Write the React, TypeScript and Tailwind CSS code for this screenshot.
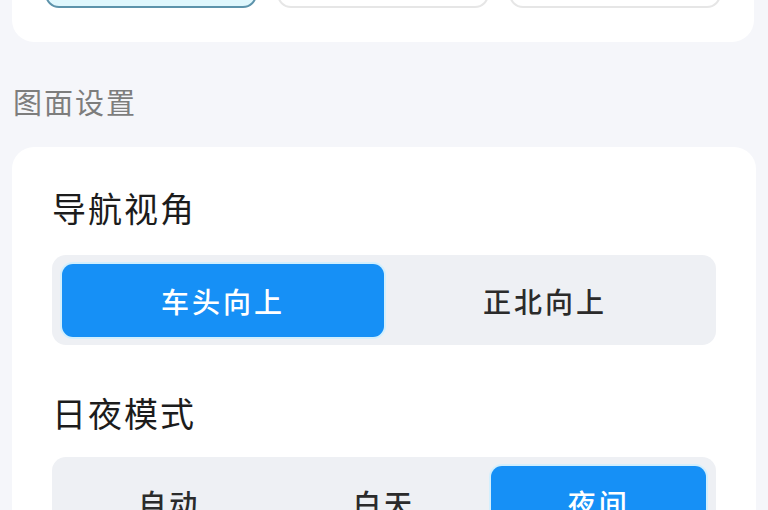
import React from "react";

const font = { fontFamily: '"Noto Sans CJK SC", "Noto Sans", sans-serif' };

function Segmented({ options, active }: { options: string[]; active: number }) {
    return (
        <div
            className="grid rounded-[14px] bg-[#eef0f4] px-[10px] pt-[9px] pb-[8px]"
            style={{ gridTemplateColumns: `repeat(${options.length}, minmax(0, 1fr))` }}
        >
            {options.map((label, i) => (
                <div
                    key={label}
                    className={
                        i === active
                            ? "flex h-[73px] items-center justify-center rounded-[11px] bg-[#1690f6] text-[28px] font-medium tracking-[3px] text-white shadow-[0_0_0_2px_#d3effd]"
                            : "flex h-[73px] items-center justify-center text-[28px] font-medium tracking-[3px] text-[#2b2b2b]"
                    }
                >
                    {label}
                </div>
            ))}
        </div>
    );
}

export default function App() {
    return (
        <div className="h-[510px] w-[768px] overflow-hidden bg-[#f5f6fa]" style={font}>
            {/* Previous card, cut off at the top */}
            <div className="-mt-[72px] ml-[12px] mr-[14px] rounded-[22px] bg-white px-[33px] pt-[20px] pb-[34px]">
                <div className="grid grid-cols-3 gap-[20px]">
                    <div className="h-[60px] rounded-[14px] border-2 border-[#5d93ab] bg-[#dff7fd]" />
                    <div className="h-[60px] rounded-[14px] border-2 border-[#e6e6e6] bg-white" />
                    <div className="h-[60px] rounded-[14px] border-2 border-[#e6e6e6] bg-white" />
                </div>
            </div>

            <div className="ml-[13px] mt-[42px] text-[29px] leading-[34px] tracking-[2px] text-[#7d7d7d]">图面设置</div>

            <div className="mx-[12px] mt-[29px] rounded-[22px] bg-white px-[40px] pt-[43px] pb-[40px]">
                <div className="text-[34px] leading-[36px] tracking-[2px] text-[#1c1c1c]">导航视角</div>
                <div className="mt-[29px]">
                    <Segmented options={["车头向上", "正北向上"]} active={0} />
                </div>

                <div className="mt-[50px] text-[34px] leading-[36px] tracking-[2px] text-[#1c1c1c]">日夜模式</div>
                <div className="mt-[26px]">
                    <Segmented options={["自动", "白天", "夜间"]} active={2} />
                </div>
            </div>
        </div>
    );
}
